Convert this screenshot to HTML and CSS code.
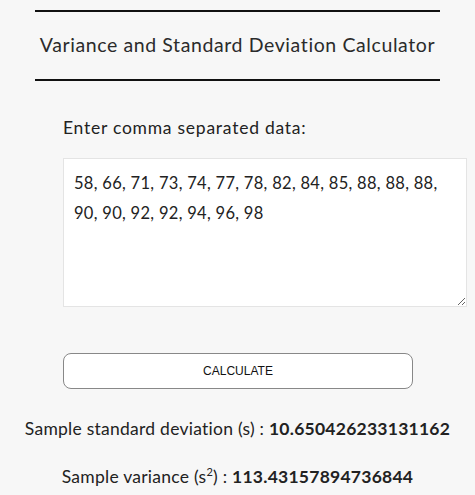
FILE: index.html
```html
<!DOCTYPE html>
<html lang="en">
<head>
  <meta charset="UTF-8" />
  <meta name="viewport" content="width=device-width, initial-scale=1.0"/>
  <title>Variance and Standard Deviation Calculator</title>
  <link rel="stylesheet" href="styles.css">
</head>
<body>
  <div class="container">
    <h1 class="title">Variance and Standard Deviation Calculator</h1>

    <div class="form">
      <label class="label" for="data">Enter comma separated data:</label>
      <textarea id="data" class="data">58, 66, 71, 73, 74, 77, 78, 82, 84, 85, 88, 88, 88, 90, 90, 92, 92, 94, 96, 98</textarea>
      <button class="btn">CALCULATE</button>
    </div>

    <div class="results">
      <p class="result">Sample standard deviation (s) : <b>10.650426233131162</b></p>
      <p class="result">Sample variance (s<sup>2</sup>) : <b>113.43157894736844</b></p>
    </div>
  </div>
</body>
</html>
```

FILE: styles.css
```css
body {
  margin: 0;
  background: #f7f7f7;
  color: #222;
  font-family: Lato, 'Open Sans', sans-serif;
}

.container {
  width: 475px;
  padding-top: 10px;
}

.title {
  margin: 0 35px;
  padding: 21px 0 22px;
  border-top: 2px solid #111;
  border-bottom: 2px solid #111;
  font-size: 19.5px;
  font-weight: 400;
  line-height: 24px;
  text-align: center;
  color: #2b2b2b;
  letter-spacing: 0.6px;
}

.form {
  padding: 35px 0 0 63px;
  display: flex;
  flex-direction: column;
  align-items: flex-start;
}

.label {
  font-size: 17.5px;
  line-height: 24px;
  letter-spacing: 0.75px;
}

.data {
  box-sizing: border-box;
  width: 404px;
  height: 149px;
  margin-top: 18px;
  padding: 9px 10px;
  border: 1px solid #e4e4e4;
  background: #fff;
  font-family: inherit;
  font-size: 16.5px;
  line-height: 30px;
  letter-spacing: 0.3px;
  color: #222;
  resize: vertical;
}

.btn {
  width: 350px;
  height: 36px;
  margin-top: 46px;
  background: #fff;
  border: 1px solid #888;
  border-radius: 8px;
  font-family: 'Liberation Sans', Arial, sans-serif;
  font-size: 12px;
  color: #111;
}

.results {
  padding-top: 26px;
  text-align: center;
}

.result {
  margin: 0 0 21px;
  font-size: 17.5px;
  line-height: 27px;
  letter-spacing: 0.25px;
}

.result b {
  font-weight: 700;
}

.result sup {
  font-size: 11px;
  line-height: 0;
}
```
